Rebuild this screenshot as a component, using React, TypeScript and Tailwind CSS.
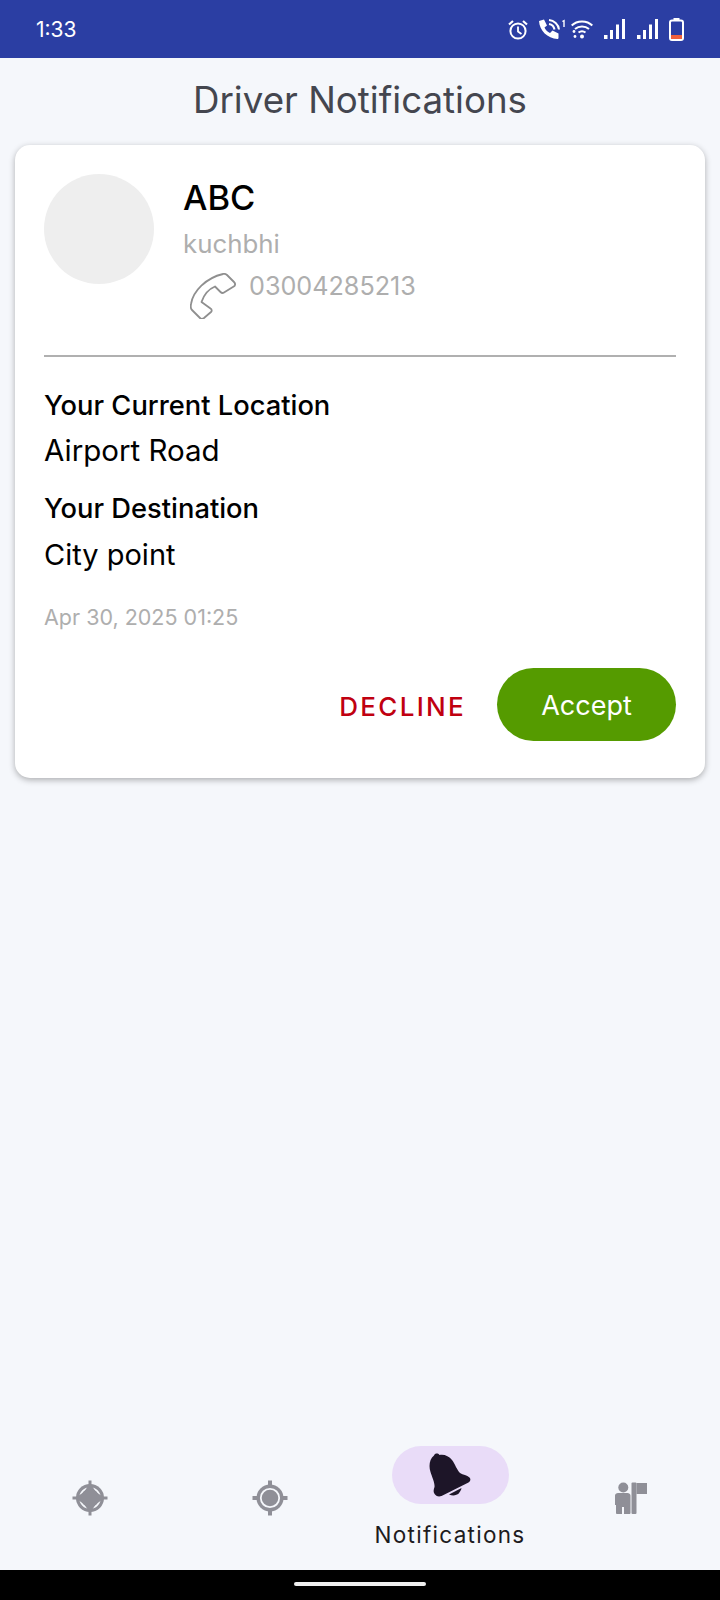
import React from 'react';

const StatusIcons: React.FC = () => (
    <div className="flex items-center text-white">
        {/* alarm */}
        <svg width="20" height="21" viewBox="0 0 20 21" fill="none" stroke="currentColor" strokeWidth="2" className="mr-[11px]">
            <circle cx="10" cy="12" r="7.6" />
            <path d="M10 7.5V12.5L13.5 15" strokeWidth="1.8" />
            <path d="M1 5.5L5 2M19 5.5L15 2" strokeWidth="2.2" />
        </svg>
        {/* wifi call */}
        <svg width="26" height="20" viewBox="0 0 26 20" className="mr-[6px]">
            <path d="M0 2L5 0.5L8 6.5L5.5 8.5C6.5 11 8.5 13 11 14L13.5 11.5L19.5 14.5V19C19.5 19.5 19 20 18.5 20C8.5 19.5 0.5 11.5 0 2Z" fill="currentColor" />
            <path d="M10 5C13 5.5 15 7.5 15.5 10.5M10 1C15 1.5 19.5 5.5 20 10.5" fill="none" stroke="currentColor" strokeWidth="2" />
            <path d="M23.4 2.5L25 1.6V8" fill="none" stroke="currentColor" strokeWidth="1.4" />
        </svg>
        {/* wifi */}
        <svg width="22" height="20" viewBox="0 0 22 20" fill="none" stroke="currentColor" strokeWidth="2" className="mr-[11px]">
            <path d="M0.7 6.5C6 1 16 1 21.3 6.5" />
            <path d="M4 10C8 6.5 14 6.5 18 10" />
            <path d="M7.5 13.5C9.5 12 12.5 12 14.5 13.5" />
            <circle cx="11" cy="17.5" r="2" fill="currentColor" stroke="none" />
            <circle cx="3" cy="12.5" r="1.4" fill="currentColor" stroke="none" />
            <circle cx="4" cy="17.5" r="1.4" fill="currentColor" stroke="none" />
        </svg>
        <SignalBars className="mr-[12px]" />
        <SignalBars className="mr-[11px]" />
        {/* battery */}
        <svg width="15" height="23" viewBox="0 0 15 23">
            <rect x="4.5" y="0" width="6" height="3" fill="currentColor" />
            <rect x="1" y="2.5" width="13" height="19.5" rx="2" fill="none" stroke="currentColor" strokeWidth="2" />
            <rect x="2" y="17" width="11" height="4" fill="#f0603c" />
        </svg>
    </div>
);

const SignalBars: React.FC<{ className?: string }> = ({ className }) => (
    <svg width="21" height="20" viewBox="0 0 21 20" fill="currentColor" className={className}>
        <rect x="0" y="16" width="3.5" height="4" />
        <rect x="6" y="11" width="3" height="9" />
        <rect x="12" y="5.5" width="3" height="14.5" />
        <rect x="18" y="0" width="3" height="20" />
    </svg>
);

const CompassIcon: React.FC = () => (
    <svg width="36" height="36" viewBox="0 0 36 36" className="text-[#8f8f97]" fill="currentColor">
        <rect x="16.5" y="0.5" width="3" height="35" />
        <rect x="0.5" y="16.5" width="35" height="3" />
        <circle cx="18" cy="18" r="14" />
        <circle cx="18" cy="18" r="10" fill="none" stroke="#f5f7fb" strokeWidth="1.6" />
        <path d="M18 3L24 12L33 18L24 24L18 33L12 24L3 18L12 12Z" />
    </svg>
);

const TargetIcon: React.FC = () => (
    <svg width="36" height="36" viewBox="0 0 36 36" className="text-[#8f8f97]" fill="currentColor">
        <rect x="16" y="0.5" width="4" height="35" />
        <rect x="0.5" y="16" width="35" height="4" />
        <circle cx="18" cy="18" r="13.5" />
        <circle cx="18" cy="18" r="9.2" fill="none" stroke="#f5f7fb" strokeWidth="1.8" />
        <circle cx="18" cy="18" r="7" />
    </svg>
);

const BellIcon: React.FC = () => (
    <svg width="42" height="44" viewBox="0 0 42 44" fill="#1d1528">
        <path d="M5 2.5C6 0 9 0 10.5 2C15 1 20 3 23 7C26 11 28 17 31 20C34 22 38 22 40.5 24.5C42 26 41.5 28.5 39.5 29.5L12.5 43C10 44 7.5 43.5 6 41.5C4 39 4.5 36.5 5.5 34C6 30 3 24 1.5 19C-0.5 13 0.5 6 5 2.5Z" />
        <path d="M20 41.5L32.5 35C31.5 40 27 44.5 20 41.5Z" />
    </svg>
);

const GuideIcon: React.FC = () => (
    <svg width="32" height="32" viewBox="0 0 32 32" fill="#8f8f97">
        <circle cx="8.3" cy="5.5" r="5" />
        <path d="M0 13.5C0 12 1.5 11 3 11H12.5C14 11 15.5 12 15.5 13.5V31C15.5 31.5 15 32 14.5 32H9V25H7V32H2C1.5 32 1 31.5 1 31V23H0Z" />
        <rect x="16.5" y="0.5" width="5" height="31.5" rx="1" />
        <path d="M21.5 1H32V12H21.5Z" />
    </svg>
);

export default function App() {
    return (
        <div className="w-[720px] h-[1600px] flex flex-col bg-[#f5f7fb] font-['Inter',sans-serif] overflow-hidden">
            {/* status bar */}
            <div className="h-[58px] shrink-0 bg-[#2b3ea3] flex items-center justify-between pl-[36px] pr-[36px]">
                <span className="text-white text-[21px] font-normal pt-[2px]">1:33</span>
                <StatusIcons />
            </div>

            <h1 className="text-center text-[#44464f] text-[36.7px] leading-[44px] mt-[20px]">Driver Notifications</h1>

            {/* request card */}
            <div className="mx-[15px] mt-[23px] h-[633px] bg-white rounded-[15px] shadow-[0_2px_6px_rgba(0,0,0,0.3)] px-[29px] pt-[29px]">
                <div className="flex h-[183px] border-b-2 border-[#b0b0b0]">
                    <div className="w-[110px] h-[110px] rounded-full bg-[#eeeeee]" />
                    <div className="ml-[29px]">
                        <div className="text-[34.5px] leading-[40px] font-[450] text-black mt-[4px]">ABC</div>
                        <div className="text-[25.8px] leading-[30px] text-[#aeaeae] mt-[11px]">kuchbhi</div>
                        <div className="flex items-start mt-[12px]">
                            <svg width="46" height="46" viewBox="0 0 46 46" fill="none" stroke="#8f8f8f" strokeWidth="1.8" strokeLinejoin="round" className="ml-[7px] mt-[2px]">
                                <path d="M33 1C35 0.5 36 1 37 2L44 9C45.5 10.5 45.5 11.5 44.5 13L34 19.5C32.5 20.5 31.5 20 30.5 19L25 13.5C19 16 14 21.5 11.5 29L20.5 35.5C22 36.5 22 38 21 39L14 45C12.5 46 11 46 10 45L2 37C0.5 35.5 0.5 33.5 1 31C3 18 16 5 33 1Z" />
                            </svg>
                            <span className="text-[25.2px] leading-[30px] text-[#aeaeae] ml-[13px]">03004285213</span>
                        </div>
                    </div>
                </div>

                <div className="mt-[34px] text-[27.3px] leading-[30px] text-black font-[450]">Your Current Location</div>
                <div className="mt-[12px] text-[29.5px] leading-[34px] text-black">Airport Road</div>
                <div className="mt-[27px] text-[27.3px] leading-[30px] text-black font-[450]">Your Destination</div>
                <div className="mt-[14px] text-[29px] leading-[34px] text-black">City point</div>
                <div className="mt-[32px] text-[21.5px] leading-[26px] text-[#aeaeae]">Apr 30, 2025 01:25</div>

                <div className="mt-[38px] flex items-center justify-end">
                    <button className="text-[#c00010] text-[26px] font-[450] tracking-[2.3px] mr-[31px] pt-[4px]">DECLINE</button>
                    <button className="w-[179px] h-[73px] rounded-full bg-[#559b00] text-white text-[27px] pt-[4px]">Accept</button>
                </div>
            </div>

            {/* bottom nav */}
            <div className="mt-auto h-[126px] flex shrink-0">
                <div className="w-[180px] flex justify-center pt-[36px]"><CompassIcon /></div>
                <div className="w-[180px] flex justify-center pt-[36px]"><TargetIcon /></div>
                <div className="w-[180px] flex flex-col items-center pt-[2px]">
                    <div className="w-[117px] h-[58px] rounded-full bg-[#e9dcf8] flex items-center justify-center"><BellIcon /></div>
                    <span className="mt-[18px] text-[22.5px] leading-[26px] tracking-[1.3px] text-[#1d1b20]">Notifications</span>
                </div>
                <div className="w-[180px] flex justify-center pt-[38px] pl-[2px]"><GuideIcon /></div>
            </div>

            {/* gesture bar */}
            <div className="h-[30px] shrink-0 bg-black flex items-center justify-center">
                <div className="w-[132px] h-[4px] rounded-full bg-[#f0f0f0] mb-[2px]" />
            </div>
        </div>
    );
}
